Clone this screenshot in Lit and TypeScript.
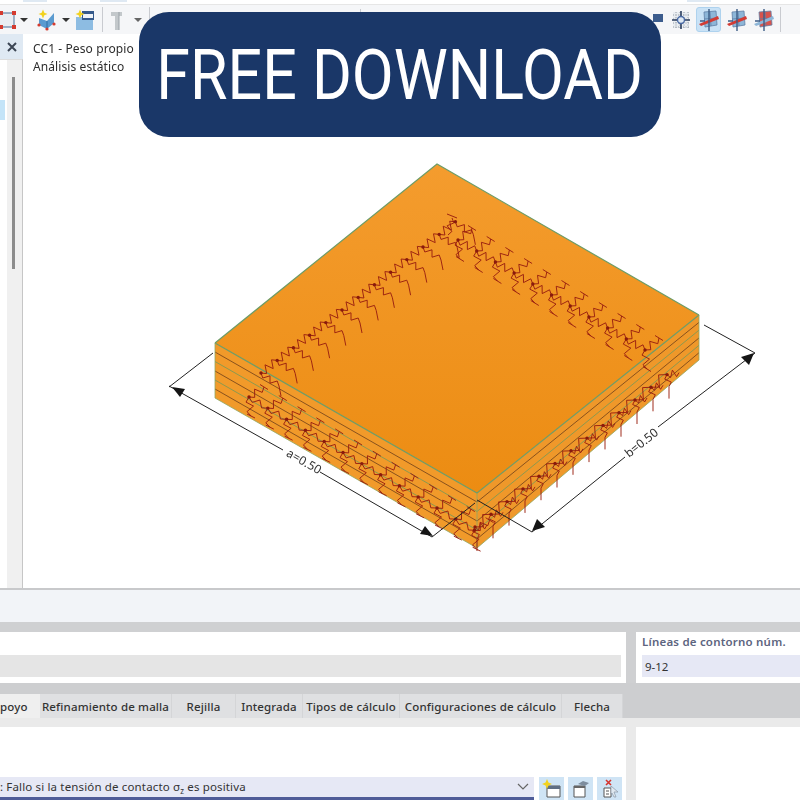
import { LitElement, html, css, svg } from "lit";
import { customElement } from "lit/decorators.js";

type P = [number, number];

const zig = (a: P, b: P, n: number, amp: number): string => {
  const dx = b[0] - a[0], dy = b[1] - a[1];
  const len = Math.hypot(dx, dy) || 1;
  const nx = -dy / len, ny = dx / len;
  let d = `M${a[0]} ${a[1]}`;
  for (let i = 1; i < n; i++) {
    const t = i / n, s = i % 2 ? amp : -amp;
    d += `L${(a[0] + dx * t + nx * s).toFixed(1)} ${(a[1] + dy * t + ny * s).toFixed(1)}`;
  }
  return d + `L${b[0]} ${b[1]}`;
};
const tick = (p: P, dx: number, dy: number) => `M${p[0] - dx} ${p[1] - dy}L${p[0] + dx} ${p[1] + dy}`;

const run = (start: P, step: P, count: number): P[] =>
  Array.from({ length: count }, (_, i) => [start[0] + step[0] * i, start[1] + step[1] * i] as P);

const leftBranch = run([261, 373], [16.2, -12.6], 13);
const rightBranch = run([458, 240], [18.7, 11], 11);
const frontRow = run([249, 397], [18.8, 11.1], 13);
const sideRow = run([475, 527], [16, -12.7], 13);

function springs(): string {
  let d = "";
  leftBranch.forEach((p, i) => {
    const next = leftBranch[i + 1];
    if (next) d += zig(p, next, 5, 4);
    const end: P = [p[0] + 18, p[1] + 13];
    const tail: P = [end[0] + 2, end[1] + 10];
    d += zig(p, end, 5, 3) + `L${tail[0]} ${tail[1]}`;
  });
  d += zig([448, 235], [452, 218], 4, 3) + tick([452, 216], 5, 2);
  rightBranch.forEach((p, i) => {
    const next = rightBranch[i + 1];
    if (next) d += zig(p, next, 5, 3.5);
    const up: P = [p[0] + 14, p[1] - 12];
    d += zig(p, up, 4, 3.5) + tick(up, 4, 2.5);
    const down: P = [p[0] + 2, p[1] + 19];
    d += zig(p, down, 4, 3.5) + tick(down, 4, 2.5);
  });
  frontRow.forEach((p, i) => {
    const next = frontRow[i + 1];
    if (next) d += zig(p, next, 4, 3);
    const up: P = [p[0] + 15, p[1] - 10];
    d += zig(p, up, 4, 3.5) + tick(up, 4, 2.5);
    const down: P = [p[0] + 2, p[1] + 19];
    d += zig(p, down, 4, 3.5) + tick(down, 4, 2);
  });
  sideRow.forEach((p, i) => {
    const next = sideRow[i + 1];
    if (next) d += zig(p, next, 3, 5);
    const off: P = [p[0] + 12, p[1] - 2];
    d += zig(p, off, 4, 3.5);
    const down: P = [p[0] + 2, p[1] + 12];
    d += zig(p, down, 3, 3) + `L${p[0] + 2} ${p[1] + 24}`;
  });
  return d;
}

const FRONT_LEFT = 343, FRONT_MID = 493, SIDE_RIGHT = 315;
const layers = [9, 18.5, 28, 37, 46];

const model = svg`
  <defs>
    <linearGradient id="top" x1="0" y1="0" x2="0" y2="1">
      <stop offset="0" stop-color="#f49c2e"/>
      <stop offset="1" stop-color="#ec8c12"/>
    </linearGradient>
  </defs>
  <polygon points="215,343 477,493 477,548 215,398" fill="#f19a2a"/>
  <polygon points="477,493 699,315 699,360 477,548" fill="#ef982a"/>
  ${layers.map((o, i) => svg`
    <path d="M215 ${FRONT_LEFT + o}L477 ${FRONT_MID + o}" class=${i % 2 ? "lg" : "ld"}/>
    <path d="M477 ${FRONT_MID + o}L699 ${SIDE_RIGHT + o * 0.82}" class=${i % 2 ? "lg" : "ld"}/>`)}
  <polygon points="437,164 699,315 477,493 215,343" fill="url(#top)"/>
  <path d="M215 343L437 164L699 315M215 343L477 493L699 315" class="edge"/>
  <path d="M215 343V398L477 548L699 360V315M477 493V548" class="edge2"/>
  <path d=${springs()} class="spring"/>
  ${[...leftBranch, ...rightBranch, ...frontRow, ...sideRow].map(p => svg`<circle cx=${p[0]} cy=${p[1]} r="1.7" class="node"/>`)}
  <path d="M213 353L169 387M169 386L283 450M320 472L432 537M432 537L475 503" class="dim"/>
  <path d="M172 387L185 389L180 397Z" class="arrow"/>
  <path d="M433 536L420 534L425 526Z" class="arrow"/>
  <text x="0" y="0" transform="translate(302 465) rotate(30)" class="dimtext" text-anchor="middle">a=0.50</text>
  <path d="M477 500L532 532M532 532L625 457M658 427L755 353M704 325L755 353" class="dim"/>
  <path d="M532 531L537 519L545 527Z" class="arrow"/>
  <path d="M754 353L749 365L741 357Z" class="arrow"/>
  <text x="0" y="0" transform="translate(644 446) rotate(-38.6)" class="dimtext" text-anchor="middle">b=0.50</text>
`;

const star = (x: number, y: number, r = 4.5) => svg`<path d="M${x} ${y - r}L${x + r * .3} ${y - r * .3}L${x + r} ${y}L${x + r * .3} ${y + r * .3}L${x} ${y + r}L${x - r * .3} ${y + r * .3}L${x - r} ${y}L${x - r * .3} ${y - r * .3}Z" fill="#f2d21f"/>`;

const planeIcon = (fill: string, plane: string) => html`
  <svg class="ic20" viewBox="0 0 22 22">
    <path d="M6 3L18 2L19 16L7 18Z" fill=${fill}/>
    <path d="M6 3L18 2L19 16L7 18ZM12 3L13 17M6 10L19 9" fill="none" stroke="#5f7fa6" stroke-width=".8"/>
    <path d="M1 15L20 7L21 10L3 17Z" fill=${plane}/>
    <path d="M11 0V22M2 12H7" stroke="#3d5d86" stroke-width="1.4"/>
  </svg>`;

@customElement("app-root")
export class AppRoot extends LitElement {
  static styles = css`
    :host { display: block; width: 800px; height: 800px; overflow: hidden; position: relative; background: #fff; font-family: "Noto Sans", sans-serif; color: #333; }
    .toolbar { height: 34px; box-sizing: border-box; background: #f5f6f8; display: flex; flex-direction: column; }
    .tabstrip { height: 5px; background: #fff; border-bottom: 1px solid #e6e6e6; box-sizing: border-box; display: flex; }
    .tabstrip i { display: block; height: 2px; background: #dfe9f3; }
    .t1 { width: 24px; margin-left: 23px; }
    .t2 { width: 27px; margin-left: 53px; }
    .t3 { width: 24px; margin-left: 560px; }
    .tools { flex: 1; display: flex; align-items: center; }
    .ic { display: block; flex: none; }
    .ic20 { display: block; width: 22px; height: 22px; flex: none; }
    .drop { width: 0; height: 0; border: 4px solid transparent; border-top: 4px solid #333; border-bottom: 0; flex: none; }
    .drop.light { border-top-color: #666; }
    .sep { width: 1px; height: 25px; background: #c9cbd0; flex: none; }
    .active { width: 25px; height: 25px; box-sizing: border-box; background: #c9e2f6; border: 1px solid #aed2ee; border-radius: 3px; display: flex; align-items: center; justify-content: center; flex: none; }
    .more { font-size: 12px; color: #777; margin-left: 30px; }
    .main { height: 554px; display: flex; }
    .side { width: 23px; display: flex; flex-direction: column; flex: none; }
    .sidehead { height: 25px; background: #dfe9f3; display: flex; align-items: center; justify-content: center; flex: none; }
    .sidegap { height: 1px; background: #fff; }
    .sidebody { flex: 1; display: flex; border-right: 1px solid #c6c6c6; border-top: 1px solid #ddd; }
    .tree { width: 7px; background: #fff; padding-top: 40px; flex: none; }
    .tree i { display: block; width: 5px; height: 20px; background: #c4e4f8; }
    .track { flex: 1; background: #f0f0f0; padding: 17px 0 0 5px; }
    .thumb { width: 3px; height: 192px; background: #8c8c8c; }
    .view { flex: 1; position: relative; background: #fff; padding: 6px 0 0 10px; font-size: 12px; line-height: 18px; color: #2d2d2d; letter-spacing: .1px; filter: blur(.25px); }
    .view div { position: relative; }
    .view svg { position: absolute; inset: 0; width: 777px; height: 554px; }
    .edge { fill: none; stroke: #6e9c66; stroke-width: 1.2; }
    .edge2 { fill: none; stroke: #8fa762; stroke-width: .8; }
    .lg { stroke: #8b9a50; stroke-width: 1; }
    .ld { stroke: #7d4a1c; stroke-width: .9; }
    .spring { fill: none; stroke: #9a2010; stroke-width: .95; stroke-linejoin: round; }
    .node { fill: #8a1a0c; }
    .dim { fill: none; stroke: #222; stroke-width: 1; }
    .arrow { fill: #151515; }
    .dimtext { font: 12px "Noto Sans", sans-serif; fill: #333; }
    .rule { height: 2px; background: #c8c9cb; }
    .band { height: 32px; background: #f2f4f8; }
    .gray { height: 10px; background: #cfd0d2; }
    .row { display: grid; grid-template-columns: 626px 10px 164px; background: #cfd0d2; }
    .cell { background: #fff; height: 51px; box-sizing: border-box; padding-top: 23px; }
    .field { height: 22px; background: #e5e5e5; margin-right: 5px; }
    .rcell { padding: 0 0 0 6px; }
    .label { height: 23px; font-size: 11.5px; font-weight: 600; line-height: 19px; color: #5d6580; letter-spacing: .2px; }
    .input { height: 22px; background: #e6e8f5; font-size: 11.5px; line-height: 23px; padding-left: 3px; color: #333; margin-right: -4px; }
    .tabs { height: 35px; background: #cdced0; padding-top: 11px; box-sizing: border-box; display: grid; grid-template-columns: 40px 132px 64px 67px 97px 162px 61px 1fr; }
    .tab { background: #dfe0e2; font-size: 11.5px; line-height: 25px; text-align: center; color: #333; font-weight: 500; letter-spacing: .15px; border-right: 1px solid #d4d5d7; white-space: nowrap; overflow: hidden; }
    .tab.on { background: #efefef; border: 0; text-align: left; }
    .fill { background: transparent; }
    .strip { height: 9px; background: #eaeaea; }
    .content { height: 73px; display: grid; grid-template-columns: 626px 10px 164px; background: #eaeaea; }
    .pane { background: #fff; position: relative; display: flex; align-items: flex-end; }
    .combo { width: 534px; height: 23px; box-sizing: border-box; background: #e6e8f5; border-bottom: 3px solid #4f5c98; font-size: 11.5px; line-height: 20px; color: #333; display: flex; justify-content: space-between; letter-spacing: .15px; flex: none; }
    .combo sub { font-size: 8px; line-height: 0; }
    .chev { margin: 6px 5px 0 0; }
    .btns { display: flex; gap: 4px; margin-left: 5px; }
    .btn { width: 25px; height: 23px; background: #cfe4f5; display: flex; align-items: center; justify-content: center; }
    .badge { position: absolute; left: 139px; top: 12px; width: 522px; height: 125px; border-radius: 30px; background: #1a3768; color: #fff; display: flex; align-items: center; justify-content: center; overflow: hidden; }
    .badge span { display: block; font: 400 70px/1 Roboto, sans-serif; white-space: nowrap; transform: scaleX(.87); }
  `;

  render() {
    return html`
      <div class="toolbar">
        <div class="tabstrip"><i class="t1"></i><i class="t2"></i><i class="t3"></i></div>
        <div class="tools">
          <svg class="ic" width="18" height="22" viewBox="0 0 18 22">
            <rect x="-4" y="4" width="18" height="14" fill="#e9eef3" stroke="#4a6f96"/>
            <rect x="12" y="2" width="4" height="4" fill="#d43b30"/>
            <rect x="12" y="16" width="4" height="4" fill="#d43b30"/>
            <rect x="0" y="2" width="3" height="4" fill="#d43b30"/>
            <rect x="0" y="16" width="3" height="4" fill="#d43b30"/>
          </svg>
          <div class="drop" style="margin-left:2px"></div>
          <svg class="ic" style="margin-left:9px" width="20" height="24" viewBox="0 0 20 24">
            <path d="M2 10L10 13L17 5V15L10 21L2 17Z" fill="#5b9bd0"/>
            <path d="M10 13V21" stroke="#2f6ea5"/>
            ${star(6, 6)}
            <circle cx="2" cy="17" r="1.6" fill="#d43b30"/><circle cx="10" cy="21" r="1.6" fill="#d43b30"/><circle cx="17" cy="16" r="1.6" fill="#d43b30"/>
          </svg>
          <div class="drop" style="margin-left:5px"></div>
          <svg class="ic" style="margin-left:5px" width="20" height="24" viewBox="0 0 20 24">
            <path d="M1 9H18V22H1Z" fill="#8dbce2"/>
            <path d="M7 3H19V12H7Z" fill="#35598a"/>
            <path d="M8 6H18V10H8Z" fill="#eef3f8"/>
            ${star(5, 6)}
          </svg>
          <div class="sep" style="margin-left:7px"></div>
          <svg class="ic" style="margin-left:7px" width="14" height="22" viewBox="0 0 14 22">
            <path d="M1 3H12V7H9V21H5V7H1Z" fill="#c3c8cb"/><path d="M9 3V21" stroke="#99a1a6"/>
          </svg>
          <div class="drop light" style="margin-left:10px"></div>
          <div class="sep" style="margin-left:7px"></div>
          <svg class="ic" style="margin-left:4px" width="16" height="22" viewBox="0 0 16 22">${star(8, 8)}</svg>
          <div class="sep" style="margin-left:190px;height:22px"></div>
          <svg class="ic" style="margin-left:291px" width="14" height="22" viewBox="0 0 14 22">
            <rect x="1" y="5" width="10" height="8" fill="#3c5c8d"/>
          </svg>
          <svg class="ic" style="margin-left:5px" width="20" height="20" viewBox="0 0 20 20">
            <path d="M2 2H18V18H2Z" fill="#e9edf1"/>
            <path d="M2 5H18M2 9H18M2 13H18M2 17H18M5 2V18M9 2V18M13 2V18M17 2V18" stroke="#98a0aa" stroke-dasharray="1 1.5"/>
            <path d="M1 10H19M10 1V19" stroke="#2b3e5e" stroke-width="1.6"/>
            <circle cx="10" cy="10" r="3.5" fill="#dfe9f3" stroke="#4a6aa5" stroke-width="1.4"/>
          </svg>
          <div class="active" style="margin-left:5px">${planeIcon("#8db6d8", "#d23b34")}</div>
          <div style="margin-left:5px">${planeIcon("#8db6d8", "#d23b34")}</div>
          <div style="margin-left:5px">${planeIcon("#d9534c", "#8db6d8")}</div>
          <div class="sep" style="margin-left:5px"></div>
          <div class="more">»</div>
        </div>
      </div>
      <div class="main">
        <div class="side">
          <div class="sidehead">
            <svg width="10" height="10" viewBox="0 0 10 10"><path d="M1 1L9 9M9 1L1 9" stroke="#3c4654" stroke-width="2"/></svg>
          </div>
          <div class="sidebody">
            <div class="tree"><i></i></div>
            <div class="track"><div class="thumb"></div></div>
          </div>
        </div>
        <div class="view">
          <svg viewBox="23 34 777 554">${model}</svg>
          <div>CC1 - Peso propio</div>
          <div>Análisis estático</div>
        </div>
      </div>
      <div class="rule"></div>
      <div class="band"></div>
      <div class="gray"></div>
      <div class="row">
        <div class="cell"><div class="field"></div></div>
        <div></div>
        <div class="cell rcell">
          <div class="label">Líneas de contorno núm.</div>
          <div class="input">9-12</div>
        </div>
      </div>
      <div class="tabs">
        <div class="tab on">poyo</div>
        <div class="tab">Refinamiento de malla</div>
        <div class="tab">Rejilla</div>
        <div class="tab">Integrada</div>
        <div class="tab">Tipos de cálculo</div>
        <div class="tab">Configuraciones de cálculo</div>
        <div class="tab">Flecha</div>
        <div class="fill"></div>
      </div>
      <div class="strip"></div>
      <div class="content">
        <div class="pane">
          <div class="combo">
            <span>: Fallo si la tensión de contacto σ<sub>z</sub> es positiva</span>
            <svg class="chev" width="12" height="8" viewBox="0 0 12 8"><path d="M1 1L6 6L11 1" fill="none" stroke="#666" stroke-width="1.2"/></svg>
          </div>
          <div class="btns">
            <div class="btn">
              <svg width="20" height="20" viewBox="0 0 20 20">
                <path d="M5 7H18V18H5Z" fill="#fff" stroke="#555"/><path d="M5 7H18V10H5Z" fill="#5f6f84"/>${star(5, 5, 5)}
              </svg>
            </div>
            <div class="btn">
              <svg width="20" height="20" viewBox="0 0 20 20">
                <path d="M3 7H14V18H3Z" fill="#fff" stroke="#555"/><path d="M3 7H14V9H3Z" fill="#666"/>
                <path d="M7 5L12 2L18 4L14 7Z" fill="#7d8d9e"/>
              </svg>
            </div>
            <div class="btn">
              <svg width="20" height="20" viewBox="0 0 20 20">
                <path d="M4 9H11V18H4Z" fill="#fff" stroke="#555"/><path d="M6 12H9M6 15H9" stroke="#555"/>
                <path d="M11 7L18 13L14 13L16 18L14 18L12 14L11 15Z" fill="#dfe8f0" stroke="#8a97a5" stroke-width=".7"/>
                <path d="M6 1L11 6M11 1L6 6" stroke="#d5332c" stroke-width="1.6"/>
              </svg>
            </div>
          </div>
        </div>
        <div></div>
        <div class="pane"></div>
      </div>
      <div class="badge"><span>FREE DOWNLOAD</span></div>
    `;
  }
}
